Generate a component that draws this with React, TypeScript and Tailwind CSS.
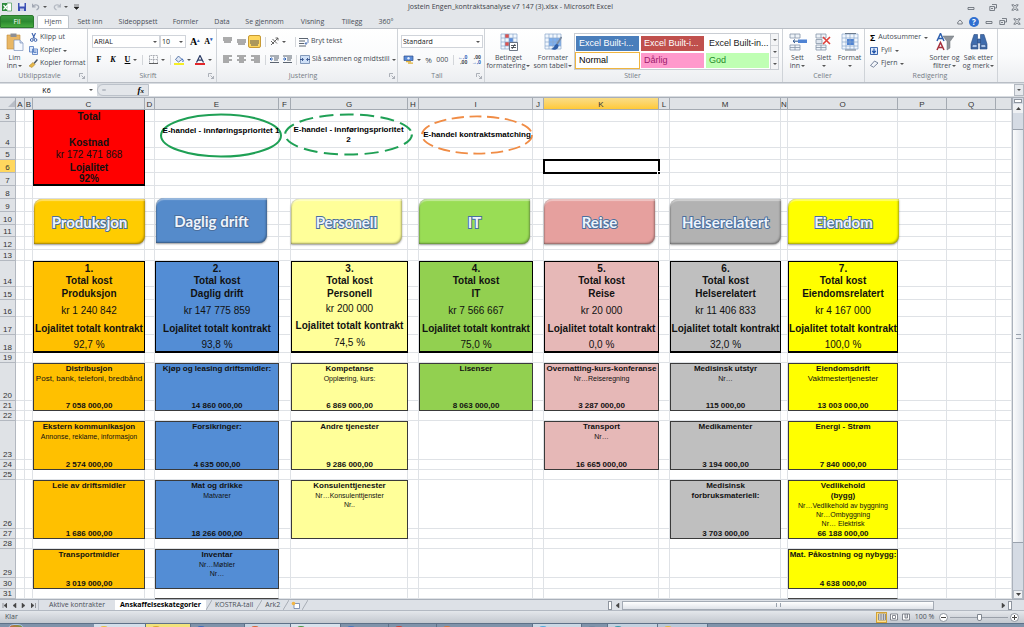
import React from "react";

type Tone = "head" | "title" | "big" | "kpi" | "kpiBold" | "sum" | "note" | "small";
type Line = [Tone, string];
type Card = {
  col: string;
  from: number;
  to: number;
  bg: string;
  heavy?: boolean;
  align?: string;
  rows: Record<number, Line[]>;
};

const COLS: [string, string][] = [
  ["A", "w-[9px]"], ["B", "w-[8px]"], ["C", "w-[112px]"], ["D", "w-[10px]"], ["E", "w-[124px]"],
  ["F", "w-[12px]"], ["G", "w-[117px]"], ["H", "w-[11px]"], ["I", "w-[114px]"], ["J", "w-[11px]"],
  ["K", "w-[115px]"], ["L", "w-[11px]"], ["M", "w-[111px]"], ["N", "w-[7px]"], ["O", "w-[110px]"],
  ["P", "w-[49px]"], ["Q", "w-[49px]"], ["", ""],
];

const ROWS: [number, string][] = [
  [3, "h-[12px]"], [4, "h-[26px]"], [5, "h-[12px]"], [6, "h-[13px]"], [7, "h-[13px]"], [8, "h-[13px]"],
  [9, "h-[13px]"], [10, "h-[13px]"], [11, "h-[12px]"], [12, "h-[13px]"], [13, "h-[11px]"], [14, "h-[26px]"],
  [15, "h-[13px]"], [16, "h-[17px]"], [17, "h-[18px]"], [18, "h-[18px]"], [19, "h-[10px]"], [20, "h-[38px]"],
  [21, "h-[10px]"], [22, "h-[10px]"], [23, "h-[39px]"], [24, "h-[10px]"], [25, "h-[10px]"], [26, "h-[49px]"],
  [27, "h-[10px]"], [28, "h-[10px]"], [29, "h-[28px]"], [30, "h-[11px]"], [31, "h-[10px]"],
];

const TONES: Record<Tone, string> = {
  head: "text-[10px] leading-[11px] font-bold",
  big: "text-[10px] leading-[11px]",
  kpi: "text-[10px] leading-[12px]",
  kpiBold: "text-[10px] leading-[12px] font-bold",
  title: "text-[8px] leading-[10px] font-bold",
  sum: "text-[8px] leading-[9px] font-bold",
  note: "text-[8px] leading-[10px]",
  small: "text-[7px] leading-[9px]",
};

const ORANGE = "bg-[#ffc000]";
const BLUE = "bg-[#538dd5]";
const CREAM = "bg-[#ffff99]";
const GREEN = "bg-[#92d050]";
const PINK = "bg-[#e6b8b7]";
const GRAY = "bg-[#bfbfbf]";
const YELLOW = "bg-[#ffff00]";

function kpi(col: string, bg: string, n: string, name: string, cost: string, loyalty: string, align = "align-bottom"): Card {
  return {
    col, from: 14, to: 18, bg, heavy: true, align,
    rows: {
      14: [["kpiBold", n], ["kpiBold", "Total kost"]],
      15: [["kpiBold", name]],
      16: [["kpi", cost]],
      17: [["kpiBold", "Lojalitet totalt kontrakt"]],
      18: [["kpi", loyalty]],
    },
  };
}

function item(col: string, from: number, bg: string, lines: Line[], sum: string): Card {
  return { col, from, to: from + 1, bg, rows: { [from]: lines, [from + 1]: sum ? [["sum", sum]] : [] } };
}

const CARDS: Card[] = [
  {
    col: "C", from: 3, to: 7, bg: "bg-[#ff0000]", heavy: true, align: "align-bottom",
    rows: {
      3: [["head", "Total"]], 4: [["head", "Kostnad"]], 5: [["big", "kr 172 471 868"]],
      6: [["head", "Lojalitet"]], 7: [["head", "92%"]],
    },
  },
  kpi("C", ORANGE, "1.", "Produksjon", "kr 1 240 842", "92,7 %"),
  kpi("E", BLUE, "2.", "Daglig drift", "kr 147 775 859", "93,8 %"),
  kpi("G", CREAM, "3.", "Personell", "kr 200 000", "74,5 %", "align-middle"),
  kpi("I", GREEN, "4.", "IT", "kr 7 566 667", "75,0 %"),
  kpi("K", PINK, "5.", "Reise", "kr 20 000", "0,0 %"),
  kpi("M", GRAY, "6.", "Helserelatert", "kr 11 406 833", "32,0 %"),
  kpi("O", YELLOW, "7.", "Eiendomsrelatert", "kr 4 167 000", "100,0 %"),
  item("C", 20, ORANGE, [["title", "Distribusjon"], ["note", "Post, bank, telefoni, bredbånd"]], "7 058 000,00"),
  item("E", 20, BLUE, [["title", "Kjøp og leasing driftsmidler:"]], "14 860 000,00"),
  item("G", 20, CREAM, [["title", "Kompetanse"], ["small", "Opplæring, kurs:"]], "6 869 000,00"),
  item("I", 20, GREEN, [["title", "Lisenser"]], "8 063 000,00"),
  item("K", 20, PINK, [["title", "Overnatting-kurs-konferanse"], ["small", "Nr…Reiseregning"]], "3 287 000,00"),
  item("M", 20, GRAY, [["title", "Medisinsk utstyr"], ["small", "Nr…"]], "115 000,00"),
  item("O", 20, YELLOW, [["title", "Eiendomsdrift"], ["note", "Vaktmestertjenester"]], "13 003 000,00"),
  item("C", 23, ORANGE, [["title", "Ekstern kommunikasjon"], ["small", "Annonse, reklame, informasjon"]], "2 574 000,00"),
  item("E", 23, BLUE, [["title", "Forsikringer:"]], "4 635 000,00"),
  item("G", 23, CREAM, [["title", "Andre tjenester"]], "9 286 000,00"),
  item("K", 23, PINK, [["title", "Transport"], ["small", "Nr…"]], "16 665 000,00"),
  item("M", 23, GRAY, [["title", "Medikamenter"]], "3 194 000,00"),
  item("O", 23, YELLOW, [["title", "Energi - Strøm"]], "7 840 000,00"),
  item("C", 26, ORANGE, [["title", "Leie av driftsmidler"]], "1 686 000,00"),
  item("E", 26, BLUE, [["title", "Mat og drikke"], ["small", "Matvarer"]], "18 266 000,00"),
  item("G", 26, CREAM, [["title", "Konsulenttjenester"], ["small", "Nr…Konsulenttjenster"], ["small", "Nr.."]], ""),
  item("M", 26, GRAY, [["title", "Medisinsk"], ["title", "forbruksmateriell:"]], "3 703 000,00"),
  item("O", 26, YELLOW, [["title", "Vedlikehold"], ["title", "(bygg)"], ["small", "Nr…Vedlikehold av byggning"], ["small", "Nr…Ombyggning"], ["small", "Nr… Elektrisk"]], "66 188 000,00"),
  item("C", 29, ORANGE, [["title", "Transportmidler"]], "3 019 000,00"),
  item("E", 29, BLUE, [["title", "Inventar"], ["small", "Nr…Møbler"], ["small", "Nr…"]], ""),
  item("O", 29, YELLOW, [["title", "Mat. Påkostning og nybygg:"]], "4 638 000,00"),
];

const SHAPES: [string, string][] = [
  ["Produksjon", "left-[34px] top-[101px] bg-[#ffcc00]"],
  ["Daglig drift", "left-[156px] top-[100px] bg-[#558bcb]"],
  ["Personell", "left-[291px] top-[101px] bg-[#ffff99]"],
  ["IT", "left-[419px] top-[101px] bg-[#99dd55]"],
  ["Reise", "left-[544px] top-[101px] bg-[#e6a09e]"],
  ["Helserelatert", "left-[670px] top-[101px] bg-[#b2b2b2]"],
  ["Eiendom", "left-[788px] top-[101px] bg-[#ffff00]"],
];

/* ---------- small drawing helpers ---------- */

const Caret = () => (
  <svg className="inline-block h-[2px] w-[4px] shrink-0 align-middle" viewBox="0 0 4 2"><path d="M0 0h4L2 2z" fill="#555" /></svg>
);
const Rule = () => <span className="h-[10px] w-px shrink-0 bg-[#d3d6da]" />;
const Launcher = () => (
  <svg className="size-[6px] shrink-0" viewBox="0 0 6 6" fill="none" stroke="#9aa0a8" strokeWidth=".8"><path d="M.5 4V.5H4M2.5 2.5l3 3M5.500 3v2.500H3" /></svg>
);
const Lines = ({ w }: { w: [number, number][] }) => (
  <svg className="h-[9px] w-[9px]" viewBox="0 0 9 9" stroke="#5b5b5b">
    {w.map(([a, b], i) => <path key={i} d={`M${a} ${i * 2 + 1}H${b}`} />)}
  </svg>
);
const VLines = ({ y }: { y: number }) => (
  <svg className="h-[9px] w-[9px]" viewBox="0 0 9 9"><path d={`M0 ${y}h9M0 ${y + 2}h9M1 ${y + 4}h7`} stroke="#5b5b5b" strokeWidth="1.100" /></svg>
);

function Grid({ accent }: { accent: "cond" | "table" | "insert" | "delete" | "format" }) {
  if (accent === "insert" || accent === "delete")
    return (
      <svg className="size-[18px]" viewBox="0 0 18 18">
        <g fill="#eef3f8" stroke="#8796a8" strokeWidth=".8"><path d="M1 1h10v4H1zM6 1v4M1 12h10v5H1zM6 12v5M1 14.500h10" /></g>
        {accent === "insert" ? (
          <><path d="M9 6.500h9v3.500H9z" fill="#4f83d3" /><path d="M4 8.200h5M6 6.500L4 8.200l2 1.800" fill="none" stroke="#31598f" /></>
        ) : (
          <><path d="M1 6.500h6v4H1z" fill="#dfe6ef" stroke="#8796a8" strokeWidth=".8" /><path d="M8 4l7 7M15 4l-7 7" stroke="#e0403a" strokeWidth="1.600" /></>
        )}
      </svg>
    );
  return (
    <svg className="size-[18px]" viewBox="0 0 18 18">
      <path d="M1 1h16v15H1z" fill="#f2f7fd" />
      {accent === "cond" && <><path d="M5 1h4v4H5zM5 9h4v4H5z" fill="#e0524c" /><path d="M9 5h4v4H9z" fill="#5a8ede" /></>}
      {accent === "table" && <path d="M5 5h12v8H5z" fill="#7eb0ef" />}
      {accent === "format" && <path d="M6 6h7v6H6z" fill="#4f83d3" />}
      <path d="M1 1h16v15H1zM1 5h16M1 9h16M1 13h16M5 1v15M9 1v15M13 1v15" fill="none" stroke="#8ba7cc" strokeWidth=".7" />
      {accent === "cond" && <><path d="M9.500 9.500h8v8h-8z" fill="#fff" stroke="#4a5568" strokeWidth=".8" /><path d="M11 12.500h5M11 14.500h5M15 11l-3 5" stroke="#30363f" strokeWidth=".8" /></>}
      {accent === "table" && <><path d="M17.500 4l-5 8" stroke="#7a8aa0" strokeWidth="1.600" /><path d="M13 11c-3 0-2 4-6 5 4 2 8 0 7.500-4z" fill="#2f5fa8" /></>}
      {accent === "format" && <path d="M4 .5h11M4 17h11" stroke="#6b7a8c" strokeWidth="1" />}
    </svg>
  );
}

const WinIcons = ({ small }: { small?: boolean }) => (
  <div className={small ? "flex items-center gap-[6px]" : "flex items-center gap-[14px]"}>
    {["Minimer", "Gjenopprett", "Lukk"].map((n, i) => (
      <button key={n} aria-label={n} type="button">
        <svg className="h-[7px] w-[8px]" viewBox="0 0 8 7" fill="none" stroke="#5f666e" strokeWidth=".8">
          {i === 0 && <path d="M1 3.500h6v2H1z" />}
          {i === 1 && <path d="M3 .5h4.500V4H5.500M.8 2.500h4.700v4H.8zM2 4.500h2" />}
          {i === 2 && <path d="M.8.8h2L4 2.200 5.200.8h2L5.200 3.500l2 2.700h-2L4 4.800 2.800 6.200h-2l2-2.700z" />}
        </svg>
      </button>
    ))}
  </div>
);

const ICON_BTN = "flex h-[11px] items-center justify-center gap-[3px]";

function Group({ label, width, children, launcher }: { label: string; width: string; children: React.ReactNode; launcher?: boolean }) {
  return (
    <section aria-label={label} className={`flex shrink-0 flex-col border-r border-[#cfd3d8] ${width}`}>
      <div className="flex h-[42px] items-start">{children}</div>
      <div className="flex h-[10px] items-center pr-[2px] text-[#757c85]">
        <span className="flex-1 text-center">{label}</span>
        {launcher && <Launcher />}
      </div>
    </section>
  );
}

function BigButton({ icon, a, b, width, caretOnly }: { icon: React.ReactNode; a: string; b?: string; width: string; caretOnly?: boolean }) {
  return (
    <button type="button" className={`flex shrink-0 flex-col items-center whitespace-nowrap pt-[4px] leading-[8px] ${width}`}>
      {icon}
      <span className="mt-[3px]">{a}</span>
      <span className="flex h-[8px] items-center gap-px">{!caretOnly && b}<Caret /></span>
    </button>
  );
}

function TitleBar() {
  return (
    <header className="flex h-[14px] items-center px-[2px]">
      <div className="flex flex-1 items-center gap-[6px]">
        <svg className="size-[10px]" viewBox="0 0 10 10"><path d="M0 1h7v8H0z" fill="#2e8b3d" /><path d="M5 1h4.500v8H5z" fill="#fff" stroke="#2e8b3d" strokeWidth=".6" /><path d="M1.500 3l4 4.500M5.500 3l-4 4.500" stroke="#fff" strokeWidth="1.200" /></svg>
        <button type="button" aria-label="Lagre">
          <svg className="size-[8px]" viewBox="0 0 8 8"><path d="M0 0h8v8H0z" fill="#3c50b4" /><path d="M1.500 0h5v3.500h-5z" fill="#e6ebf7" /><path d="M2 5.500h4V8H2z" fill="#c4cbe8" /></svg>
        </button>
        <button type="button" aria-label="Angre" className="flex items-center gap-[3px]">
          <svg className="size-[8px]" viewBox="0 0 8 8"><path d="M.5.8v3h3M.8 3.500C3 .5 7.500 2 6.500 5c-.3 1-1 1.500-2 2" fill="none" stroke="#a2a8b4" strokeWidth="1.300" /></svg><Caret />
        </button>
        <button type="button" aria-label="Gjør om" className="flex items-center gap-[3px]">
          <svg className="size-[8px]" viewBox="0 0 8 8"><path d="M7.500.8v3h-3M7.200 3.500C5 .5.500 2 1.500 5c.3 1 1 1.500 2 2" fill="none" stroke="#b4b9c2" strokeWidth="1.300" /></svg><Caret />
        </button>
        <svg className="h-[6px] w-[5px]" viewBox="0 0 5 6"><path d="M0 1h5M0 3h5L2.500 5.500z" fill="#222" stroke="#222" strokeWidth=".6" /></svg>
      </div>
      <h1 className="text-[7px] text-[#3c4148]">Jostein Engen_kontraktsanalyse v7 147 (3).xlsx - Microsoft Excel</h1>
      <div className="flex flex-1 justify-end pr-[3px]"><WinIcons /></div>
    </header>
  );
}

const TABS: [string, string][] = [
  ["Sett inn", "w-[42px]"], ["Sideoppsett", "w-[54px]"], ["Formler", "w-[41px]"], ["Data", "w-[32px]"],
  ["Se gjennom", "w-[53px]"], ["Visning", "w-[43px]"], ["Tillegg", "w-[36px]"], ["360°", "w-[32px]"],
];

function TabStrip() {
  return (
    <nav className="flex h-[14px] items-end text-[7px] text-[#4a4f57]">
      <button type="button" className="h-[13px] w-[34px] rounded-t-[2px] border border-[#2a7a2c] bg-linear-to-b from-[#3d9a41] via-[#2c8a31] to-[#46ab3f] leading-[12px] text-white">Fil</button>
      <button type="button" className="ml-[3px] h-[13px] w-[32px] rounded-t-[2px] border border-b-0 border-[#c0c5cb] bg-white leading-[12px]">Hjem</button>
      {TABS.map(([t, w]) => <button key={t} type="button" className={`h-[13px] whitespace-nowrap text-center leading-[14px] ${w}`}>{t}</button>)}
      <div className="flex h-[13px] flex-1 items-center justify-end gap-[6px] pr-[3px]">
        <svg className="size-[6px]" viewBox="0 0 6 6" fill="none" stroke="#5f666e"><path d="M.8 3L3 1l2.200 2v2H.8z" strokeWidth=".8" /></svg>
        <button type="button" aria-label="Hjelp" className="size-[10px] rounded-full bg-[#2f6fd0] text-[8px] leading-[10px] font-bold text-white">?</button>
        <WinIcons small />
      </div>
    </nav>
  );
}

function Combo({ label, value, width }: { label: string; value: string; width: string }) {
  return (
    <label className={`relative flex items-center ${width}`}>
      <select aria-label={label} className="h-[13px] w-full appearance-none border border-[#d0d4da] bg-white px-[1px] font-['Open_Sans',sans-serif] text-[7px] leading-[11px] text-[#222]"><option>{value}</option></select>
      <span className="pointer-events-none absolute right-[3px] flex"><Caret /></span>
    </label>
  );
}

function Ribbon() {
  const style = "h-[15px] w-[63px] overflow-hidden whitespace-nowrap pl-[3px] text-left font-['Liberation_Sans',Arial,sans-serif] text-[9px] leading-[15px]";
  return (
    <div className="flex h-[55px] overflow-hidden border-y border-[#b9bec5] bg-linear-to-b from-white via-[#fafbfc] to-[#eceef1] text-[7px] text-[#444a52]">
      <Group label="Utklippstavle" width="w-[88px]" launcher>
        <BigButton width="w-[29px]" a="Lim" b="inn" icon={
          <svg className="size-[18px]" viewBox="0 0 18 18"><path d="M1 2h13v14H1z" fill="#e9b765" stroke="#c08a3a" strokeWidth=".6" /><path d="M4.500.5h6v3.500h-6z" fill="#8d8f95" /><path d="M8 7h6l3 3v7.500H8z" fill="#f6f9ff" stroke="#7c93bb" strokeWidth=".7" /><path d="M14 7v3h3" fill="#cfdcf0" stroke="#7c93bb" strokeWidth=".7" /></svg>
        } />
        <div className="flex flex-col gap-[2px] pt-[3px]">
          <button type="button" className="flex h-[11px] items-center gap-[2px]">
            <svg className="size-[9px]" viewBox="0 0 9 9" fill="none" stroke="#3d62ad"><path d="M3 0l2.500 5.500M6.500 0L4 5.500" strokeWidth="1.100" /><circle cx="2.800" cy="7" r="1.400" /><circle cx="6.500" cy="7" r="1.400" /></svg>Klipp ut
          </button>
          <button type="button" className="flex h-[11px] items-center gap-[2px]">
            <svg className="size-[9px]" viewBox="0 0 9 9" fill="#dfeafc" stroke="#4a74bd" strokeWidth=".8"><path d="M.5.5h4v5.500h-4zM3.500 3h5v5.500h-5zM4.500 5h3M4.500 6.500h3" /></svg>Kopier <Caret />
          </button>
          <button type="button" className="flex h-[11px] items-center gap-[2px] whitespace-nowrap">
            <svg className="size-[9px]" viewBox="0 0 9 9"><path d="M8.500.5L5 4.500" stroke="#4b5563" strokeWidth="1.500" /><path d="M4 3.500l2 2L3 8.500 0 7z" fill="#e6b84a" stroke="#a27a22" strokeWidth=".5" /></svg>Kopier format
          </button>
        </div>
      </Group>
      <Group label="Skrift" width="w-[129px]" launcher>
        <div className="flex flex-col gap-[6px] pt-[6px] pl-[4px]">
          <div className="flex items-center">
            <Combo label="Skrifttype" value="ARIAL" width="w-[68px]" />
            <Combo label="Skriftstørrelse" value="10" width="w-[26px]" />
            <button type="button" className="ml-[4px] font-['Liberation_Serif',serif] text-[10px] leading-[12px] font-bold text-black">A<sup className="text-[5px] text-[#2e62b8]">▴</sup></button>
            <button type="button" className="ml-[4px] font-['Liberation_Serif',serif] text-[8px] leading-[12px] font-bold text-black">A<sup className="text-[5px] text-[#2e62b8]">▾</sup></button>
          </div>
          <div className="flex items-center font-['Liberation_Serif',serif] text-[8px] font-bold text-black">
            <button type="button" className={`${ICON_BTN} w-[14px]`}>F</button>
            <button type="button" className={`${ICON_BTN} w-[14px] italic`}>K</button>
            <button type="button" className={`${ICON_BTN} w-[22px]`}><span className="underline">U</span><Caret /></button>
            <Rule />
            <button type="button" aria-label="Kantlinjer" className={`${ICON_BTN} w-[27px]`}>
              <svg className="size-[9px]" viewBox="0 0 9 9" fill="none" stroke="#8b9099" strokeWidth=".8"><path d="M.5.5h8v8h-8zM4.500.5v8M.5 4.500h8" strokeDasharray="1 .6" /><path d="M0 8.500h9" stroke="#444" /></svg><Caret />
            </button>
            <Rule />
            <button type="button" aria-label="Fyllfarge" className={`${ICON_BTN} w-[22px]`}>
              <svg className="size-[10px]" viewBox="0 0 10 10"><path d="M4.500 1l3.500 3.500L4.500 7 1.500 4.500z" fill="#dfe8f5" stroke="#3e5f99" strokeWidth=".8" /><path d="M8 3.500q2 2 .8 3.500" stroke="#2d62bd" fill="none" /><path d="M0 8h10v2H0z" fill="#f5ee25" /></svg><Caret />
            </button>
            <button type="button" aria-label="Skriftfarge" className={`${ICON_BTN} w-[20px]`}>
              <svg className="size-[10px]" viewBox="0 0 10 10"><path d="M1.500 7.500L5 .5l3.500 7M2.800 5.200h4.400" fill="none" stroke="#2c3c66" strokeWidth="1.200" /><path d="M0 8h10v2H0z" fill="#e3262a" /></svg><Caret />
            </button>
          </div>
        </div>
      </Group>
      <Group label="Justering" width="w-[181px]" launcher>
        <div className="flex flex-col gap-[6px] pt-[6px] pl-[3px]">
          <div className="flex h-[13px] items-center">
            <button type="button" aria-label="Topp" className={`${ICON_BTN} w-[14px]`}><VLines y={1} /></button>
            <button type="button" aria-label="Midt" className={`${ICON_BTN} w-[14px]`}><VLines y={3} /></button>
            <button type="button" aria-label="Bunn" className="flex h-[13px] w-[13px] items-center justify-center rounded-[2px] border border-[#c79a35] bg-[#ffd75e]"><VLines y={4} /></button>
            <span className="w-[4px]" /><Rule />
            <button type="button" aria-label="Retning" className={`${ICON_BTN} w-[23px]`}>
              <svg className="size-[9px]" viewBox="0 0 9 9" fill="none" stroke="#555"><path d="M1 8l7-7M5.500 1H8v2.500M1 4l3 3M2.500 2l4.500 4.500" strokeWidth=".9" /></svg><Caret />
            </button>
            <span className="w-[6px]" /><Rule />
            <button type="button" className="ml-[3px] flex items-center gap-[2px] whitespace-nowrap">
              <svg className="size-[10px]" viewBox="0 0 10 10" fill="none" stroke="#5b6470"><path d="M0 1.500h9M0 4h6M0 6.500h5M0 9h7" /><path d="M9 2v3.500q0 1-3 1M7.500 5L6 6.500 7.500 8" stroke="#3c66b0" strokeWidth=".8" /></svg>Bryt tekst
            </button>
          </div>
          <div className="flex h-[11px] items-center">
            <button type="button" aria-label="Venstrejuster" className={`${ICON_BTN} w-[14px]`}><Lines w={[[0, 9], [0, 6], [0, 9], [0, 6]]} /></button>
            <button type="button" aria-label="Midtstill" className={`${ICON_BTN} w-[14px]`}><Lines w={[[0, 9], [2, 7], [0, 9], [2, 7]]} /></button>
            <button type="button" aria-label="Høyrejuster" className={`${ICON_BTN} w-[14px]`}><Lines w={[[0, 9], [3, 9], [0, 9], [3, 9]]} /></button>
            <span className="w-[3px]" /><Rule /><span className="w-[2px]" />
            {["Reduser innrykk", "Øk innrykk"].map((n, i) => (
              <button key={n} type="button" aria-label={n} className={`${ICON_BTN} w-[13px]`}>
                <svg className="size-[9px]" viewBox="0 0 9 9" fill="none" stroke="#5b6470"><path d="M0 1h9M4 3h5M4 5h4M0 7.500h9" /><path d={i ? "M0 4h3M1.500 2.500L3 4 1.500 5.500" : "M3 4H0M1.500 2.500L0 4l1.500 1.500"} stroke="#2e62b8" /></svg>
              </button>
            ))}
            <span className="w-[2px]" /><Rule />
            <button type="button" className="ml-[3px] flex items-center gap-[2px] whitespace-nowrap">
              <svg className="h-[9px] w-[10px]" viewBox="0 0 10 9"><path d="M.5.5h9v8h-9z" fill="#cfe0f7" stroke="#6b84ab" strokeWidth=".8" /><path d="M0 4.500h3M10 4.500H7M2 3l1.500 1.500L2 6M8 3L6.500 4.500 8 6" fill="none" stroke="#1f3f7d" strokeWidth=".8" /></svg>
              Slå sammen og midtstill <Caret />
            </button>
          </div>
        </div>
      </Group>
      <Group label="Tall" width="w-[87px]" launcher>
        <div className="flex flex-col gap-[6px] pt-[6px] pl-[3px]">
          <Combo label="Tallformat" value="Standard" width="w-[82px]" />
          <div className="flex h-[11px] items-center justify-between pr-[2px] pl-[2px]">
            <button type="button" aria-label="Regnskapsformat" className={ICON_BTN}>
              <svg className="h-[9px] w-[11px]" viewBox="0 0 11 9"><path d="M1 1h9v4.500H1z" fill="#5a8ad6" stroke="#2c4f8c" strokeWidth=".7" /><path d="M3 6h5v1.200H3zM5 7.500h5v1.200H5z" fill="#e0b23d" /><circle cx="5.500" cy="3.200" r="1.200" fill="#e5eefc" /></svg><Caret />
            </button>
            <button type="button" className="text-[8px] leading-[11px]">%</button>
            <button type="button" className="leading-[11px]">000</button>
            <Rule />
            <button type="button" className="flex flex-col items-end text-[5px] leading-[5px] font-bold"><span className="text-[#2e62b8]">←,0</span><span>,00</span></button>
            <button type="button" className="flex flex-col items-end text-[5px] leading-[5px] font-bold"><span>,00</span><span className="text-[#2e62b8]">→,0</span></button>
          </div>
        </div>
      </Group>
      <Group label="Stiler" width="w-[298px]">
        <BigButton width="w-[47px]" a="Betinget" b="formatering" icon={<Grid accent="cond" />} />
        <BigButton width="w-[42px]" a="Formater" b="som tabell" icon={<Grid accent="table" />} />
        <div className="mt-[4px] flex h-[37px] border border-[#c9cdd3] bg-white">
          <div className="grid grid-cols-3 content-center gap-x-[2px] gap-y-[2px] px-[1px]">
            <button type="button" className={`${style} bg-[#4a7ebb] text-white`}>Excel Built-i...</button>
            <button type="button" className={`${style} bg-[#c0504d] text-white`}>Excel Built-i...</button>
            <button type="button" className={`${style} text-[#222]`}>Excel Built-in...</button>
            <button type="button" className={`${style} outline-1 outline-[#efb540] text-black`}>Normal</button>
            <button type="button" className={`${style} bg-[#ff99cc] text-[#9c1a6b]`}>Dårlig</button>
            <button type="button" className={`${style} bg-[#bfffb3] text-[#1f8a2a]`}>God</button>
          </div>
          <div className="flex w-[8px] flex-col justify-around border-l border-[#c9cdd3] bg-[#f3f4f6]">
            {["Forrige", "Neste", "Mer"].map((n) => <button key={n} type="button" aria-label={n} className="flex flex-1 items-center justify-center border-b border-[#d5d8dc] last:border-b-0"><Caret /></button>)}
          </div>
        </div>
      </Group>
      <Group label="Celler" width="w-[82px]">
        <BigButton width="w-[29px]" a="Sett" b="inn" icon={<Grid accent="insert" />} />
        <BigButton width="w-[24px]" a="Slett" caretOnly icon={<Grid accent="delete" />} />
        <BigButton width="w-[27px]" a="Format" caretOnly icon={<Grid accent="format" />} />
      </Group>
      <Group label="Redigering" width="w-[133px]">
        <div className="flex w-[62px] flex-col gap-[2px] pt-[3px] pl-[5px]">
          <button type="button" className="flex h-[11px] items-center gap-[3px] whitespace-nowrap"><span className="w-[8px] text-[9px] font-bold text-black">Σ</span>Autosummer <Caret /></button>
          <button type="button" className="flex h-[11px] items-center gap-[3px]">
            <svg className="size-[8px]" viewBox="0 0 8 8"><path d="M.5.5h7v7h-7z" fill="#dce8fa" stroke="#3b66ad" /><path d="M4 1.500V5M2.200 3.800L4 6l1.800-2.200" fill="none" stroke="#2456ab" strokeWidth="1.200" /></svg>Fyll <Caret />
          </button>
          <button type="button" className="flex h-[11px] items-center gap-[3px]">
            <svg className="size-[8px]" viewBox="0 0 8 8"><path d="M4.500 1L8 3 3.500 7.200.5 5.500z" fill="#f4f6fa" stroke="#596a86" strokeWidth=".8" /></svg>Fjern <Caret />
          </button>
        </div>
        <BigButton width="w-[35px]" a="Sorter og" b="filtrer" icon={
          <svg className="size-[18px]" viewBox="0 0 18 18"><path d="M1 8L4.500.5 8 8M2.500 5.500h4" fill="none" stroke="#2d5fae" strokeWidth="1.500" /><path d="M1 17l3.500-7.500L8 17M2.500 14.500h4" fill="none" stroke="#a52f3b" strokeWidth="1.500" /><path d="M7 3h11l-4 5.500V15l-3 2V8.500z" fill="#8f949b" stroke="#6b7076" strokeWidth=".5" /></svg>
        } />
        <BigButton width="w-[33px]" a="Søk etter" b="og merk" icon={
          <svg className="size-[18px]" viewBox="0 0 18 18" fill="#3f6cad" stroke="#294a80" strokeWidth=".6"><path d="M4 1.500h3.500v4L8 16H1v-5zM14 1.500h-3.500v4L10 16h7v-5z" /><path d="M7.500 6h3v4h-3z" /><path d="M2.500 11.500h4.500v3H2zM11 11.500h4.500l.5 3h-5z" fill="#a9c4ea" /></svg>
        } />
      </Group>
    </div>
  );
}

function FormulaBar() {
  return (
    <div className="flex h-[15px] items-center border-b border-[#a9afb8] bg-[#d8dce1] py-[1px] text-[8px]">
      <label className="flex h-full w-[97px] items-center bg-white pr-[4px]">
        <input aria-label="Navneboks" defaultValue="K6" className="h-full min-w-0 flex-1 bg-transparent pl-[4px] text-center font-['Open_Sans',sans-serif] text-[7px] text-black" /><Caret />
      </label>
      <div className="flex h-full w-[52px] items-center justify-between rounded-l-full border border-[#bcc2ca] bg-[#e3e6ea] px-[4px]">
        <span className="h-[2px] w-[4px] rounded-full bg-[#b9bec6]" />
        <button type="button" aria-label="Sett inn funksjon" className="font-['Liberation_Serif',serif] text-[9px] leading-[10px] font-bold italic">f<span className="text-[7px]">x</span></button>
      </div>
      <input aria-label="Formellinje" className="h-full min-w-0 flex-1 bg-white px-[2px]" />
      <button type="button" aria-label="Utvid formellinje" className="flex h-full w-[10px] items-center justify-center border border-[#b3b9c1] bg-[#e6e9ed]"><Caret /></button>
    </div>
  );
}

function cellFor(col: string, row: number) {
  return CARDS.find((c) => c.col === col && row >= c.from && row <= c.to);
}

function Cell({ col, row }: { col: string; row: number }) {
  const card = cellFor(col, row);
  if (!card) {
    const active = col === "K" && row === 6;
    const edge = row === 31 && (col === "E" || col === "O") ? "border-b-[#444]" : "border-b-[#dfe2e6]";
    return (
      <td className={`border-r border-b border-r-[#dfe2e6] ${edge} ${active ? "relative outline-2 -outline-offset-1 outline-black" : ""}`}>
        {active && <span className="absolute -right-[2px] -bottom-[2px] size-[3px] border-t border-l border-white bg-black" />}
      </td>
    );
  }
  const first = row === card.from && row !== 3;
  const last = row === card.to;
  const color = card.heavy ? "border-black" : "border-[#3a3a3a]";
  const top = first ? "border-t" : "";
  const bottom = last ? (card.heavy ? "border-b-2" : "border-b") : "";
  const valign = card.heavy ? card.align : last ? "align-bottom" : "align-top";
  return (
    <td className={`border-x text-center whitespace-nowrap text-[#111] ${color} ${top} ${bottom} ${valign} ${card.bg}`}>
      {(card.rows[row] || []).map(([tone, text], i) => <div key={i} className={TONES[tone]}>{text}</div>)}
    </td>
  );
}

function Sheet() {
  return (
    <main className="relative min-w-0 flex-1 overflow-hidden bg-white">
      <table className="w-full table-fixed border-separate border-spacing-0 text-[8px] leading-[9px]">
        <colgroup>
          <col className="w-[16px]" />
          {COLS.map(([c, w], i) => <col key={c + i} className={w} />)}
        </colgroup>
        <thead>
          <tr className="h-[12px] bg-[#dfe2e6] text-[#333]">
            <th aria-label="Merk alt" className="border-r border-b border-[#a4aab2]">
              <svg className="ml-auto size-[7px]" viewBox="0 0 7 7"><path d="M7 0v7H0z" fill="#b8bdc5" /></svg>
            </th>
            {COLS.map(([c], i) => (
              <th key={c + i} scope="col" className={`border-r border-b border-[#a4aab2] align-bottom font-normal ${c === "K" ? "bg-linear-to-b from-[#f9dd85] to-[#ffc933]" : ""}`}>{c}</th>
            ))}
          </tr>
        </thead>
        <tbody>
          {ROWS.map(([r, h]) => (
            <tr key={r} className={h}>
              <th scope="row" className={`border-r border-b border-[#b3b8c0] align-bottom font-normal text-[#333] ${r === 6 ? "bg-[#ffd75e]" : "bg-[#dfe2e6]"}`}>{r}</th>
              {COLS.map(([c], i) => <Cell key={c + i} col={c} row={r} />)}
            </tr>
          ))}
        </tbody>
      </table>

      <Oval className="left-[160px] top-[16px] h-[43px] w-[122px] text-[#1fa055]" text={["E-handel - innføringsprioritet 1"]} />
      <Oval dashed className="left-[284px] top-[16px] h-[41px] w-[129px] text-[#1fa055]" text={["E-handel - innføringsprioritet", "2"]} />
      <Oval dashed className="left-[421px] top-[18px] h-[38px] w-[112px] text-[#f08c45]" text={["E-handel kontraktsmatching"]} />

      {SHAPES.map(([t, c]) => (
        <button
          key={t}
          type="button"
          className={`absolute flex h-[45px] w-[111px] items-center justify-center rounded-tl-[8px] rounded-br-[8px] font-[Lato,sans-serif] text-[15px] leading-[18px] font-bold whitespace-nowrap text-[#eef4fb] shadow-[inset_0_2px_1px_rgba(255,255,255,0.4),inset_-1px_-1px_2px_rgba(0,0,0,0.35),inset_1px_0_1px_rgba(0,0,0,0.2),0_1px_2px_rgba(0,0,0,0.4)] [-webkit-text-stroke:2px_#4a6f9e] [paint-order:stroke_fill] ${c}`}
        >
          {t}
        </button>
      ))}
    </main>
  );
}

function Oval({ className, text, dashed }: { className: string; text: string[]; dashed?: boolean }) {
  return (
    <div className={`absolute flex items-center justify-center ${className}`}>
      <svg className="absolute inset-0 h-full w-full overflow-visible" viewBox="0 0 120 42" preserveAspectRatio="none" fill="none">
        <ellipse cx="60" cy="21" rx="59" ry="20.500" stroke="currentColor" strokeWidth="2" strokeDasharray={dashed ? "13 6" : undefined} />
      </svg>
      <p className={`relative text-center text-[8px] leading-[10px] font-bold whitespace-nowrap text-black ${dashed ? "" : "pb-[10px]"}`}>
        {text.map((t) => <span key={t} className="block">{t}</span>)}
      </p>
    </div>
  );
}

function VScroll() {
  return (
    <aside className="flex w-[12px] shrink-0 flex-col border-x border-[#aab1bb] bg-[#d5dbe4]">
      <span className="m-[1px] h-[4px] border border-[#8e959f] bg-white" />
      <button type="button" aria-label="Rull opp" className="flex h-[9px] items-center justify-center bg-[#eef0f3]"><svg className="h-[3px] w-[5px]" viewBox="0 0 5 3"><path d="M0 3h5L2.500 0z" fill="#444" /></svg></button>
      <span className="h-[16px]" />
      <span className="flex flex-1 items-center justify-center border-y border-[#9aa2ad] bg-linear-to-r from-[#fafbfc] to-[#dfe4eb]"><span className="h-[5px] w-[5px] border-y border-[#9aa2ad]" /></span>
      <span className="h-[47px]" />
      <button type="button" aria-label="Rull ned" className="flex h-[9px] items-center justify-center border border-[#b3bac4] bg-[#eef0f3]"><svg className="h-[3px] w-[5px]" viewBox="0 0 5 3"><path d="M0 0h5L2.500 3z" fill="#444" /></svg></button>
    </aside>
  );
}

const Slant = () => <svg className="h-[10px] w-[6px] shrink-0" viewBox="0 0 6 10"><path d="M0 10L6 0" stroke="#9aa1ab" strokeWidth=".8" /></svg>;
const Arrow = ({ d }: { d: string }) => <svg className="size-[5px]" viewBox="0 0 5 5"><path d={d} fill="#444" stroke="#444" strokeWidth=".5" /></svg>;

function SheetTabs() {
  return (
    <div className="flex h-[11px] shrink-0 items-center border-t border-[#a9b0ba] bg-[#dde1e7] text-[7px] text-[#4a4f57]">
      <div className="flex w-[38px] items-center justify-around">
        {["M1 0v5M5 0v5L2 2.500z", "M4 0v5L1 2.500z", "M1 0v5l3-2.500z", "M4.500 0v5M0 0v5l3-2.500z"].map((d, i) => (
          <button key={i} type="button" aria-label={["Første", "Forrige", "Neste", "Siste"][i]} className="flex"><Arrow d={d} /></button>
        ))}
      </div>
      <button type="button" className="w-[77px] border-l border-[#b9bfc8] leading-[10px]">Aktive kontrakter</button>
      <button type="button" className="h-full bg-white px-[5px] leading-[10px] font-bold whitespace-nowrap text-black">Anskaffelseskategorier</button>
      <Slant />
      <button type="button" className="px-[3px] leading-[10px] whitespace-nowrap">KOSTRA-tall</button>
      <Slant />
      <button type="button" className="px-[3px] leading-[10px]">Ark2</button>
      <Slant />
      <button type="button" aria-label="Sett inn regneark" className="px-[2px]"><svg className="h-[8px] w-[9px]" viewBox="0 0 9 8"><path d="M3 2.500h5.500v5H3z" fill="#fff" stroke="#6b7fa5" strokeWidth=".8" /><circle cx="2.500" cy="2.500" r="1.800" fill="#f2b545" /></svg></button>
      <Slant />
      <span className="flex-1" />
      <span className="h-[9px] w-[4px] border border-[#8e959f] bg-white" />
      <div className="flex h-full w-[400px] items-center">
        <button type="button" aria-label="Rull til venstre" className="flex w-[10px] justify-center"><Arrow d="M4 0v5L1 2.500z" /></button>
        <span className="flex h-[9px] w-[312px] items-center justify-center border border-[#a4abb5] bg-linear-to-b from-white to-[#dfe3e9]"><span className="h-[4px] w-[5px] border-x border-[#9aa2ad]" /></span>
        <span className="flex-1" />
        <button type="button" aria-label="Rull til høyre" className="flex w-[10px] justify-center"><Arrow d="M1 0v5l3-2.500z" /></button>
        <span className="h-[9px] w-[4px] border border-[#8e959f] bg-white" />
      </div>
      <span className="w-[12px]" />
    </div>
  );
}

function StatusBar() {
  return (
    <footer className="flex h-[13px] shrink-0 items-center border-t border-[#b3b9c2] bg-linear-to-b from-[#e4e7eb] to-[#c3c8cf] px-[5px] text-[7px] text-[#4a4f57]">
      <span className="flex-1">Klar</span>
      <div className="flex items-center gap-[2px]">
        <button type="button" aria-label="Normal" className="flex h-[11px] w-[11px] items-center justify-center border border-[#d3a235] bg-[#ffe08a]"><svg className="size-[8px]" viewBox="0 0 8 8" fill="#fff" stroke="#6a6f78" strokeWidth=".7"><path d="M.5 1h7v6h-7zM.5 3h7M.5 5h7M3 1v6M5.500 1v6" /></svg></button>
        <button type="button" aria-label="Sideoppsettvisning" className="flex w-[10px] justify-center"><svg className="size-[8px]" viewBox="0 0 8 8" fill="#fff" stroke="#6a6f78" strokeWidth=".8"><path d="M.5 1h7v6h-7zM2.500 2.500h3v3h-3z" /></svg></button>
        <button type="button" aria-label="Sideskift" className="flex w-[10px] justify-center"><svg className="size-[8px]" viewBox="0 0 8 8" fill="#fff" stroke="#6a6f78" strokeWidth=".8"><path d="M.5 1h7v6h-7zM3 1v4h2.500V1" /></svg></button>
      </div>
      <span className="w-[27px] text-center whitespace-nowrap">100 %</span>
      <button type="button" aria-label="Zoom ut" className="ml-[1px] flex size-[9px] items-center justify-center rounded-full border border-[#8f959e] bg-white"><svg className="size-[5px]" viewBox="0 0 5 5"><path d="M0 2.500h5" stroke="#444" /></svg></button>
      <input type="range" aria-label="Zoom" defaultValue={50} className="mx-[2px] h-[10px] w-[58px] appearance-none bg-transparent [&::-webkit-slider-runnable-track]:h-px [&::-webkit-slider-runnable-track]:bg-[#9aa0a9] [&::-webkit-slider-thumb]:-mt-[3px] [&::-webkit-slider-thumb]:h-[7px] [&::-webkit-slider-thumb]:w-[5px] [&::-webkit-slider-thumb]:appearance-none [&::-webkit-slider-thumb]:rounded-b-[2px] [&::-webkit-slider-thumb]:border [&::-webkit-slider-thumb]:border-[#7f868f] [&::-webkit-slider-thumb]:bg-white" />
      <button type="button" aria-label="Zoom inn" className="flex size-[9px] items-center justify-center rounded-full border border-[#8f959e] bg-white"><svg className="size-[5px]" viewBox="0 0 5 5"><path d="M0 2.500h5M2.500 0v5" stroke="#444" /></svg></button>
    </footer>
  );
}

const TASKS: [string, string][] = [
  ["w-[52px] bg-[#d4dfea]", "bg-[#e8c34a]"], ["w-[45px] bg-[#f2e27c]", "bg-[#d9ab33]"], ["w-[54px]", "bg-[#3d6dbd]"],
  ["w-[46px] bg-[#c8d5e2]", "bg-[#d9683a]"], ["w-[50px] bg-[#d8e2ec]", "bg-[#4c9a4a]"], ["w-[48px]", "bg-[#4a79c0]"],
  ["w-[48px]", "bg-[#c9473d]"], ["w-[96px]", "bg-[#d07a45]"], ["w-[49px] bg-[#cbd8e4]", "bg-[#57aee0]"],
  ["w-[26px]", "bg-[#7389a3]"], ["w-[50px] bg-[#c3d1df]", "bg-[#3f9db0]"], ["w-[50px] bg-[#b9c8d8]", "bg-[#e2bd48]"],
];

function Taskbar() {
  return (
    <div className="flex h-[5px] shrink-0 overflow-hidden border-t border-[#5e7188] bg-[#7f93aa]">
      <span className="ml-[7px] h-[14px] w-[18px] rounded-full border border-[#a9c6e4] bg-linear-to-r from-[#c9603a] to-[#5e9c48]" />
      <span className="w-[69px]" />
      {TASKS.map(([c, dot], i) => (
        <span key={i} className={`flex shrink-0 border-r border-[#5e7188] pl-[6px] ${c}`}><span className={`mt-[2px] h-[3px] w-[8px] rounded-t-full ${dot}`} /></span>
      ))}
    </div>
  );
}

export default function App() {
  return (
    <div className="flex min-h-screen flex-col overflow-hidden bg-[#e3e6ea] font-['Open_Sans','Noto_Sans',sans-serif]">
      <TitleBar />
      <TabStrip />
      <Ribbon />
      <FormulaBar />
      <div className="flex font-['Liberation_Sans',Arial,sans-serif]">
        <Sheet />
        <VScroll />
      </div>
      <SheetTabs />
      <StatusBar />
      <Taskbar />
    </div>
  );
}
